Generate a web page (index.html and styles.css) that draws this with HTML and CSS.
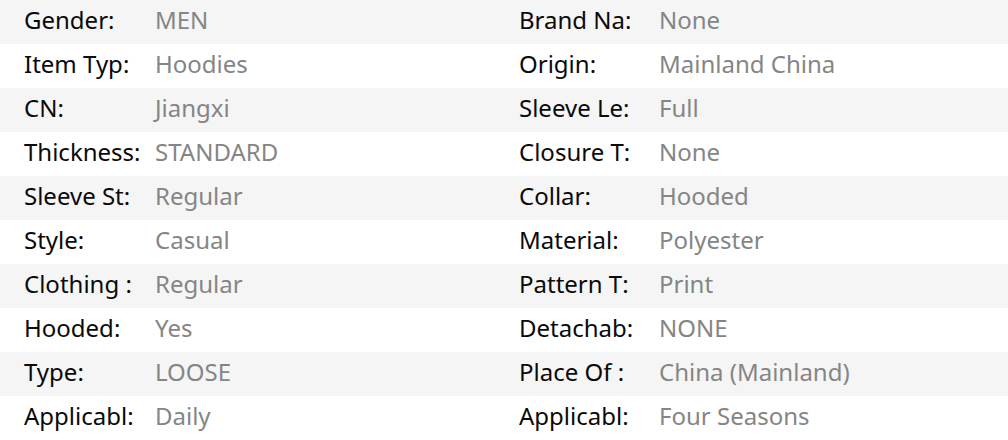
FILE: index.html
```html
<!DOCTYPE html>
<html>
<head>
<meta charset="utf-8">
<link rel="stylesheet" href="styles.css">
</head>
<body>
<div class="specs">
  <div class="row"><span class="k">Gender:</span><span class="v">MEN</span><span class="k">Brand Na:</span><span class="v">None</span></div>
  <div class="row"><span class="k">Item Typ:</span><span class="v">Hoodies</span><span class="k">Origin:</span><span class="v">Mainland China</span></div>
  <div class="row"><span class="k">CN:</span><span class="v">Jiangxi</span><span class="k">Sleeve Le:</span><span class="v">Full</span></div>
  <div class="row"><span class="k">Thickness:</span><span class="v">STANDARD</span><span class="k">Closure T:</span><span class="v">None</span></div>
  <div class="row"><span class="k">Sleeve St:</span><span class="v">Regular</span><span class="k">Collar:</span><span class="v">Hooded</span></div>
  <div class="row"><span class="k">Style:</span><span class="v">Casual</span><span class="k">Material:</span><span class="v">Polyester</span></div>
  <div class="row"><span class="k">Clothing :</span><span class="v">Regular</span><span class="k">Pattern T:</span><span class="v">Print</span></div>
  <div class="row"><span class="k">Hooded:</span><span class="v">Yes</span><span class="k">Detachab:</span><span class="v">NONE</span></div>
  <div class="row"><span class="k">Type:</span><span class="v">LOOSE</span><span class="k">Place Of :</span><span class="v">China (Mainland)</span></div>
  <div class="row"><span class="k">Applicabl:</span><span class="v">Daily</span><span class="k">Applicabl:</span><span class="v">Four Seasons</span></div>
</div>
</body>
</html>
```

FILE: styles.css
```css
html, body {
  margin: 0;
  padding: 0;
  background: #ffffff;
}
.specs {
  width: 1008px;
  font-family: "Noto Sans", "Open Sans", sans-serif;
  font-size: 24px;
}
.row {
  display: grid;
  grid-template-columns: 131px 364px 140px 1fr;
  padding-left: 24px;
  height: 44px;
  line-height: 40px;
  padding-bottom: 4px;
  box-sizing: border-box;
  align-items: center;
  white-space: nowrap;
}
.row:nth-child(odd) {
  background: #f5f5f5;
}
.k {
  color: #0a0a0a;
}
.v {
  color: #858585;
}
```
